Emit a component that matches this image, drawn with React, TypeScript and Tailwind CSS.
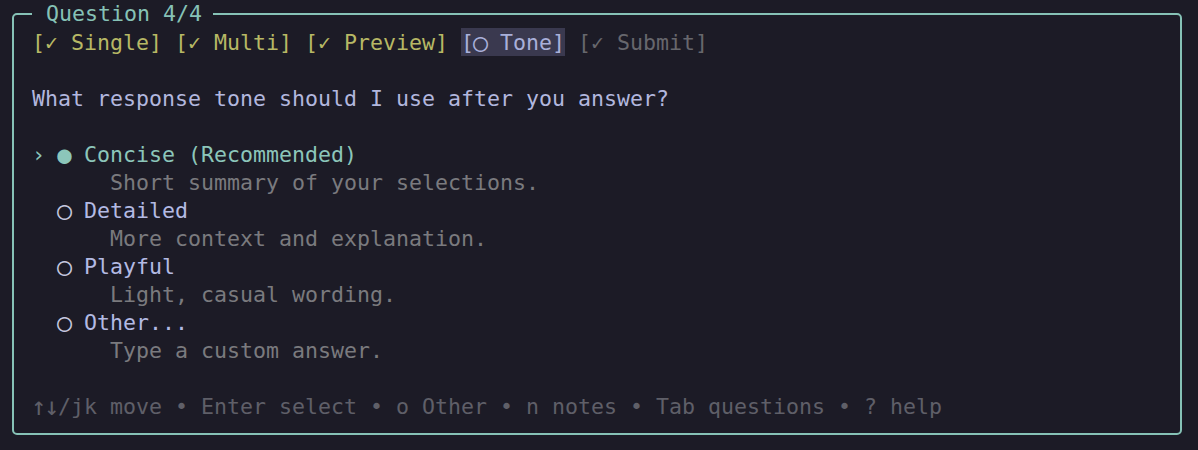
import React from "react";

const Row = ({ children, className = "" }: { children?: React.ReactNode; className?: string }) => (
  <div className={"h-[28px] leading-[28px] whitespace-pre " + className}>{children}</div>
);

const Big = ({ ch, size = "text-[25px]" }: { ch: string; size?: string }) => (
  <span className={"inline-flex w-[13px] h-[28px] justify-center items-center align-top leading-[28px] " + size}>{ch}</span>
);

export default function App() {
  return (
    <div
      className="w-[1198px] h-[450px] bg-[#1c1b26] pt-[13px] pl-[12px] overflow-hidden"
      style={{ fontFamily: '"DejaVu Sans Mono", "Liberation Mono", monospace' }}
    >
      <div className="relative w-[1170px] h-[422px] border-2 border-[#86c2b6] rounded-[5px] pl-[18px] pt-[14px] text-[21.6px]">
        <div className="absolute left-[18px] top-[-15px] h-[28px] leading-[28px] bg-[#1c1b26] pl-[14px] pr-[11px] text-[#86c2b6] whitespace-pre">
          Question 4/4
        </div>
        <Row>
          <span className="text-[#b7b865]">[✓ Single] [✓ Multi] [✓ Preview] </span>
          <span className="bg-[#3a394f] text-[#a9b0da] inline-block h-[28px] mt-[-1px] pt-[1px] align-top">[<Big ch="○" />{" Tone]"}</span>
          <span className="text-[#67676d]"> [✓ Submit]</span>
        </Row>
        <Row />
        <Row className="text-[#b2b7de]">What response tone should I use after you answer?</Row>
        <Row />
        <Row className="text-[#8cc6ba]">{"› "}<Big ch="●" size="text-[24px]" />{" Concise (Recommended)"}</Row>
        <Row className="text-[#7a7a7e]">      Short summary of your selections.</Row>
        <Row className="text-[#b3bae3]">{"  "}<span className="text-[#c4c7de]"><Big ch="○" /></span> Detailed</Row>
        <Row className="text-[#7a7a7e]">      More context and explanation.</Row>
        <Row className="text-[#b3bae3]">{"  "}<span className="text-[#c4c7de]"><Big ch="○" /></span> Playful</Row>
        <Row className="text-[#7a7a7e]">      Light, casual wording.</Row>
        <Row className="text-[#b3bae3]">{"  "}<span className="text-[#c4c7de]"><Big ch="○" /></span> Other...</Row>
        <Row className="text-[#7a7a7e]">      Type a custom answer.</Row>
        <Row />
        <Row className="text-[#5f5f68]"><Big ch="↑" size="text-[25px]" /><Big ch="↓" size="text-[25px]" />/jk move • Enter select • o Other • n notes • Tab questions • ? help</Row>
      </div>
    </div>
  );
}
